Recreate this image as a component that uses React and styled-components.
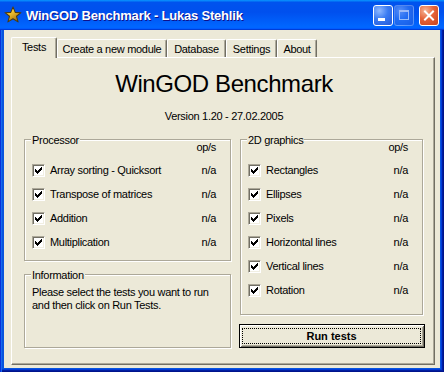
import React from 'react'
import styled, { createGlobalStyle } from 'styled-components'

const GlobalStyle = createGlobalStyle`
  html, body {
    margin: 0;
    padding: 0;
    background: #ffffff;
  }
  body {
    font-family: "Liberation Sans", Arial, sans-serif;
    font-size: 11px;
    letter-spacing: -0.3px;
    color: #000;
  }
`

const Window = styled.div`
  width: 444px;
  height: 372px;
  box-sizing: border-box;
  display: flex;
  flex-direction: column;
  background: #0855dd;
  box-shadow: inset 1px 0 #0831d9, inset 2px 0 #166aee, inset -1px -1px #00138c,
    inset -2px -2px #001ea0, inset -3px -3px #003bda;
`

const TitleBar = styled.div`
  height: 30px;
  flex-shrink: 0;
  display: flex;
  align-items: center;
  padding: 0 5px 0 4px;
  background: linear-gradient(180deg, #0997ff, #0053ee 8%, #0050ee 40%, #06f 88%, #06f 93%, #005bff 95%, #003dd7 96%, #003dd7);
`

const Title = styled.div`
  flex: 1;
  margin-left: 4px;
  color: #fff;
  font-weight: bold;
  font-size: 13px;
  letter-spacing: -0.2px;
  text-shadow: 1px 1px #0f1089;
  white-space: nowrap;
`

const Controls = styled.div`
  display: flex;
  align-items: center;
`

const CaptionButton = styled.div`
  width: 20px;
  height: 21px;
  box-sizing: border-box;
  margin-left: ${p => p.$gap}px;
  border: 1px solid ${p => (p.$disabled ? 'rgba(255,255,255,0.45)' : '#fff')};
  border-radius: 3px;
  display: flex;
  align-items: center;
  justify-content: center;
  background: ${p => (p.$close
    ? 'radial-gradient(circle at 30% 25%, #f6b597 0%, #e56339 45%, #c8431c 100%)'
    : 'radial-gradient(circle at 30% 25%, #8fb8ff 0%, #3a7bf2 45%, #2458d8 100%)')};
  opacity: ${p => (p.$disabled ? 0.6 : 1)};
`

const Client = styled.div`
  flex: 1;
  margin: 0 4px 4px 4px;
  padding: 7px 5px 3px 7px;
  background: #ece9d8;
  display: flex;
  flex-direction: column;
`

const TabStrip = styled.div`
  height: 20px;
  display: flex;
  align-items: flex-end;
`

const Tab = styled.div`
  width: ${p => p.$w}px;
  height: ${p => (p.$active ? 21 : 18)}px;
  margin-bottom: ${p => (p.$active ? -1 : 0)}px;
  box-sizing: border-box;
  position: relative;
  z-index: ${p => (p.$active ? 1 : 0)};
  background: #ece9d8;
  border-top: 1px solid #fff;
  border-left: 1px solid #fff;
  border-right: 1px solid #716f64;
  border-radius: 2px 2px 0 0;
  box-shadow: inset -1px 0 #aca899;
  text-align: center;
  line-height: ${p => (p.$active ? 19 : 18)}px;
  white-space: nowrap;
`

const TabPage = styled.div`
  flex: 1;
  box-sizing: border-box;
  border: 1px solid;
  border-color: #fff #716f64 #716f64 #fff;
  box-shadow: inset -1px -1px #aca899;
  padding: 12px 10px 0 12px;
  display: flex;
  flex-direction: column;
`

const Heading = styled.div`
  font-size: 24px;
  line-height: 28px;
  letter-spacing: -0.4px;
  text-align: center;
`

const Version = styled.div`
  margin-top: 12px;
  line-height: 13px;
  text-align: center;
`

const Columns = styled.div`
  margin-top: 16px;
  display: flex;
  gap: 9px;
`

const Column = styled.div`
  width: ${p => p.$w}px;
  display: flex;
  flex-direction: column;
`

const Group = styled.div`
  box-sizing: border-box;
  margin-top: ${p => p.$top || 0}px;
  height: ${p => (p.$h ? `${p.$h}px` : 'auto')};
  border: 1px solid #aca899;
  box-shadow: inset 1px 1px #fff, 1px 1px #fff;
  padding: 0 14px ${p => p.$pad || 0}px 7px;
  display: flex;
  flex-direction: column;
`

const GroupHead = styled.div`
  margin-top: -6px;
  display: flex;
  justify-content: space-between;
  align-items: flex-start;
`

const Caption = styled.span`
  margin-left: -1px;
  padding: 0 1px;
  line-height: 13px;
  background: #ece9d8;
`

const Unit = styled.span`
  margin-top: 7px;
  line-height: 13px;
`

const Rows = styled.div`
  margin-top: 4px;
  display: flex;
  flex-direction: column;
`

const Row = styled.div`
  height: 24px;
  display: flex;
  align-items: center;
  line-height: 13px;
`

const Label = styled.span`
  flex: 1;
  margin-left: 5px;
  white-space: nowrap;
`

const Box = styled.span`
  width: 13px;
  height: 13px;
  box-sizing: border-box;
  flex-shrink: 0;
  border: 1px solid;
  border-color: #aca899 #fff #fff #aca899;
  box-shadow: inset 1px 1px #716f64, inset -1px -1px #f1efe2;
  background: #fff;
  display: flex;
`

const Note = styled.div`
  margin: 4px -10px 0 0;
  line-height: 13px;
  white-space: nowrap;
`

const RunButton = styled.button`
  margin: 9px 0 0 -1px;
  width: 186px;
  height: 24px;
  box-sizing: border-box;
  padding: 3px 3px 3px 2px;
  border: 1px solid #000;
  background: #ece9d8;
  box-shadow: inset 1px 1px #fff, inset -1px -1px #716f64, inset 2px 2px #f1efe2, inset -2px -2px #aca899;
  font-family: "Liberation Sans", Arial, sans-serif;
  font-size: 11px;
  font-weight: bold;
  color: #000;
  display: flex;
`

const FocusRing = styled.span`
  flex: 1;
  border: 1px dotted #000;
  display: flex;
  align-items: center;
  justify-content: center;
`

// classic 7x7 check glyph, one 3px run per column
const CHECK = [2, 3, 4, 3, 2, 1, 0]

const CheckBox = () => (
  <Box>
    <svg width="11" height="11" viewBox="1 1 11 11" shapeRendering="crispEdges">
      <path d={CHECK.map((r, c) => `M${3 + c} ${3 + r}h1v3h-1z`).join('')} fill="#000" />
    </svg>
  </Box>
)

const StarIcon = () => (
  <svg width="18" height="18" viewBox="0 0 17 17">
    <defs>
      <linearGradient id="starFill" x1="0" y1="0" x2="0.6" y2="1">
        <stop offset="0" stopColor="#fff2a8" />
        <stop offset="0.45" stopColor="#f2c230" />
        <stop offset="1" stopColor="#a8740c" />
      </linearGradient>
    </defs>
    <path
      d="M8.5 1 L10.6 6 L16 6.3 L11.8 9.7 L13.3 15 L8.5 12 L3.7 15 L5.2 9.7 L1 6.3 L6.4 6 Z"
      fill="url(#starFill)"
      stroke="#4a3a12"
      strokeWidth="1"
      strokeLinejoin="round"
    />
  </svg>
)

const processorTests = ['Array sorting - Quicksort', 'Transpose of matrices', 'Addition', 'Multiplication']
const graphicsTests = ['Rectangles', 'Ellipses', 'Pixels', 'Horizontal lines', 'Vertical lines', 'Rotation']

const tabs = [
  { name: 'Tests', w: 46, active: true },
  { name: 'Create a new module', w: 110 },
  { name: 'Database', w: 59 },
  { name: 'Settings', w: 51 },
  { name: 'About', w: 40 },
]

const TestList = ({ items }) => (
  <Rows>
    {items.map(name => (
      <Row key={name}>
        <CheckBox />
        <Label>{name}</Label>
        <span>n/a</span>
      </Row>
    ))}
  </Rows>
)

export default function App() {
  return (
    <>
      <GlobalStyle />
      <Window>
        <TitleBar>
          <StarIcon />
          <Title>WinGOD Benchmark - Lukas Stehlik</Title>
          <Controls>
            <CaptionButton $gap={0}>
              <svg width="18" height="19" viewBox="0 0 18 19">
                <rect x="4" y="12" width="7" height="3" fill="#fff" />
              </svg>
            </CaptionButton>
            <CaptionButton $gap={1} $disabled>
              <svg width="18" height="19" viewBox="0 0 18 19">
                <rect x="4.5" y="4.5" width="9" height="9" fill="none" stroke="#fff" />
                <rect x="4" y="4" width="10" height="2" fill="#fff" />
              </svg>
            </CaptionButton>
            <CaptionButton $gap={5} $close>
              <svg width="18" height="19" viewBox="0 0 18 19">
                <path d="M5 5.5 L13 13.5 M13 5.5 L5 13.5" stroke="#fff" strokeWidth="2" strokeLinecap="square" />
              </svg>
            </CaptionButton>
          </Controls>
        </TitleBar>
        <Client>
          <TabStrip>
            {tabs.map(t => (
              <Tab key={t.name} $w={t.w} $active={t.active}>{t.name}</Tab>
            ))}
          </TabStrip>
          <TabPage>
            <Heading>WinGOD Benchmark</Heading>
            <Version>Version 1.20 - 27.02.2005</Version>
            <Columns>
              <Column $w={207}>
                <Group $pad={6}>
                  <GroupHead>
                    <Caption>Processor</Caption>
                    <Unit>op/s</Unit>
                  </GroupHead>
                  <TestList items={processorTests} />
                </Group>
                <Group $top={13} $h={74}>
                  <GroupHead>
                    <Caption>Information</Caption>
                  </GroupHead>
                  <Note>
                    Please select the tests you want to run<br />
                    and then click on Run Tests.
                  </Note>
                </Group>
              </Column>
              <Column $w={183}>
                <Group $pad={12}>
                  <GroupHead>
                    <Caption>2D graphics</Caption>
                    <Unit>op/s</Unit>
                  </GroupHead>
                  <TestList items={graphicsTests} />
                </Group>
                <RunButton>
                  <FocusRing>Run tests</FocusRing>
                </RunButton>
              </Column>
            </Columns>
          </TabPage>
        </Client>
      </Window>
    </>
  )
}
